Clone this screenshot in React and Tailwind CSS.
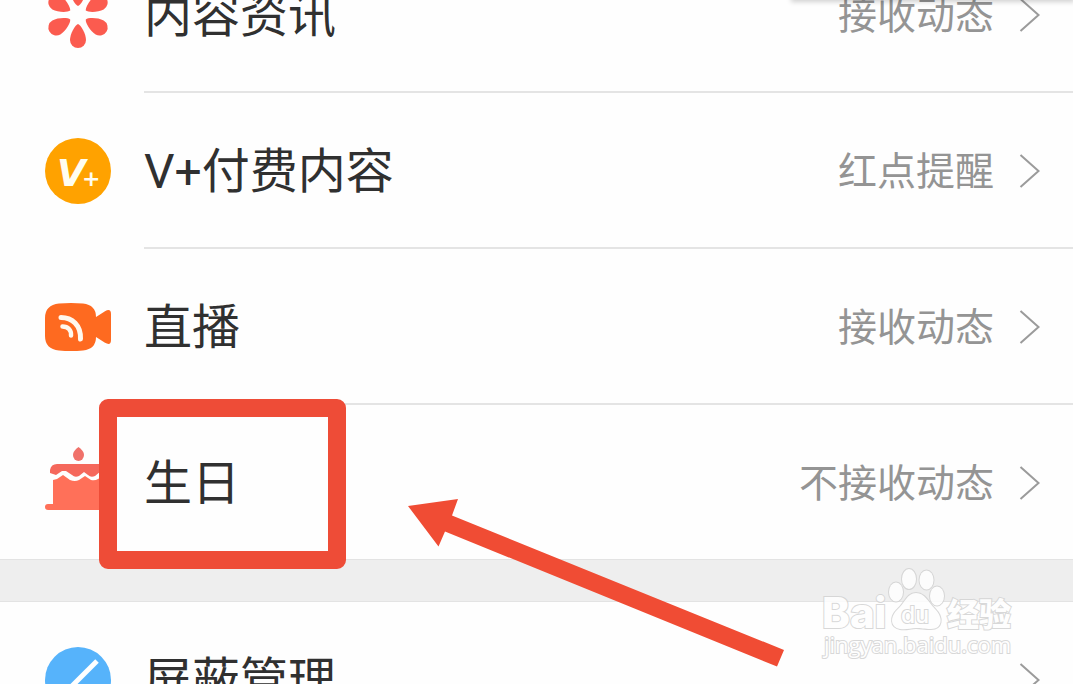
import React from "react";

function FlowerIcon() {
  return (
    <svg viewBox="0 0 66 66" className="size-[66px]" fill="#fb5b4f" aria-hidden="true">
      {[0, 60, 120, 180, 240, 300].map((angle) => (
        <path
          key={angle}
          transform={`rotate(${angle} 33 33)`}
          d="M33 42C36 43 41 52 41 58a8 8 0 0 1-16 0C25 52 30 43 33 42Z"
        />
      ))}
    </svg>
  );
}

function PaidIcon() {
  return (
    <svg viewBox="0 0 66 66" className="size-[66px]" aria-hidden="true">
      <circle cx="33" cy="33" r="33" fill="#ffa200" />
      <text x="12" y="48" fill="#fffdf0" fontFamily="'DejaVu Sans', sans-serif" fontSize="37" fontWeight="700" fontStyle="italic">
        V
        <tspan x="37" fontSize="22" fontStyle="normal">+</tspan>
      </text>
    </svg>
  );
}

function LiveIcon() {
  return (
    <svg viewBox="0 0 66 66" className="size-[66px]" aria-hidden="true">
      <path
        fill="#fe6a20"
        d="M14 9.5Q26 8.5 38 9.5Q51 11 51 23L60 17.2Q66 14 66 20V46Q66 52 60 48.8L51 43Q51 55 38 56.5Q26 57.5 14 56.5Q0 55 0 42V24Q0 11 14 9.5Z"
      />
      <g fill="none" stroke="#fff8ee" strokeLinecap="round">
        <path strokeWidth="5" d="M16 23.5C27 23.5 36 31 35.500 45" />
        <path strokeWidth="4.500" d="M17.500 32.500C23 32.500 26.500 36 26 41.500" />
      </g>
    </svg>
  );
}

function CakeIcon() {
  return (
    <svg viewBox="0 0 66 66" className="size-[66px] overflow-visible" aria-hidden="true">
      <path fill="#f0716a" d="M33.500-2C36 0 39 2.500 39 6a5.500 6 0 0 1-11 0C28 2.500 31 0 33.500-2Z" />
      <path
        fill="#f5685c"
        d="M12 15H55Q61 15 61 21V25L56 22L50 27Q46 29 43 26L39 23L34 27Q30 29 27 26L21 22L17 22L11 26L5 24V21Q6 15 12 15Z"
      />
      <path
        fill="#ff7059"
        d="M8 31L12 30L18 26L25 31Q30 33 34 31L40 27L46 31Q50 32 53 30L58 27V55H63Q66 55 66 58T63 61H3Q0 61 0 58T3 55H8Z"
      />
    </svg>
  );
}

function BlockIcon() {
  return (
    <svg viewBox="0 0 66 66" className="size-[66px]" aria-hidden="true">
      <circle cx="33" cy="33" r="33" fill="#56b3fb" />
      <path d="M52 14L14 52" stroke="#fff" strokeWidth="5" />
    </svg>
  );
}

function Chevron() {
  return (
    <svg viewBox="0 0 22 36" className="h-9 w-[22px]" fill="none" aria-hidden="true">
      <path d="M1.500 2L19.500 18L1.500 34" stroke="#9b9b9b" strokeWidth="2" />
    </svg>
  );
}

function Row({ icon, label, status, last = false }) {
  return (
    <button type="button" className="flex w-full items-stretch text-left">
      <span className="flex w-36 shrink-0 items-center pl-[45px]">{icon}</span>
      <span
        className={
          last
            ? "flex h-[154px] flex-1 items-center pt-[2px] pr-8"
            : "flex h-[156px] flex-1 items-center border-b-2 border-[#e4e4e4] pt-[2px] pr-8"
        }
      >
        <span className="flex-1 pt-0.5 text-5xl text-[#303030]">{label}</span>
        <span className="mr-[25px] pt-0.5 text-[39px] text-[#949494]">{status}</span>
        <Chevron />
      </span>
    </button>
  );
}

function Highlight() {
  return (
    <>
      <div className="pointer-events-none absolute -top-[6px] left-[99px] h-[170px] w-[247px] rounded-[9px] border-[18px] border-[#ee4c37]" />
      <svg
        viewBox="0 0 378 170"
        className="pointer-events-none absolute top-[93px] left-[407px] z-10 h-[170px] w-[378px]"
        aria-hidden="true"
      >
        <path fill="#f04c34" d="M1 8L51 1L45 17.500L377 152L370 168.500L38 33.500L31.500 48.500Z" />
      </svg>
    </>
  );
}

function Watermark() {
  return (
    <svg
      viewBox="0 0 196 96"
      className="pointer-events-none absolute top-[566px] right-[57px] h-24 w-[196px] opacity-85"
      fill="#fff"
      stroke="#d2d2d2"
      strokeWidth="2"
      paintOrder="stroke"
      role="img"
      aria-label="Baidu 经验"
    >
      <text x="2" y="62" fontFamily="Inter, sans-serif" fontSize="42" fontWeight="800">Bai</text>
      <ellipse cx="76" cy="26" rx="7" ry="9.500" />
      <ellipse cx="89" cy="13" rx="7" ry="10" />
      <ellipse cx="106.500" cy="14" rx="7" ry="9.500" />
      <ellipse cx="117" cy="30" rx="7" ry="9.500" />
      <path d="M96 27C105 27 108 36 115 43C124 52 122 63 111 63C104 63 101 62 96 62C90 62 87 64 80 63C70 61 70 51 77 44C85 37 87 27 96 27Z" />
      <text x="81" y="57" fontFamily="Inter, sans-serif" fontSize="23" fontWeight="500">du</text>
      <text x="127" y="60" fontFamily="'Noto Sans CJK SC', sans-serif" fontSize="32" fontWeight="900">经验</text>
      <text x="4" y="87" fontFamily="'Open Sans', sans-serif" fontSize="22" fontWeight="400">jingyan.baidu.com</text>
    </svg>
  );
}

export default function App() {
  return (
    <main className="relative h-screen overflow-hidden bg-[#fefefe] font-[Roboto,'Noto_Sans_CJK_SC',sans-serif]">
      <div className="-mt-[63px]">
        <Row icon={<FlowerIcon />} label="内容资讯" status="接收动态" />
        <Row icon={<PaidIcon />} label="V+付费内容" status="红点提醒" />
        <Row icon={<LiveIcon />} label="直播" status="接收动态" />
        <div className="relative">
          <Row icon={<CakeIcon />} label="生日" status="不接收动态" last />
          <Highlight />
        </div>
        <div className="h-[43px] border-y border-[#e3e3e3] bg-[#eeeeee]" />
        <Row icon={<BlockIcon />} label="屏蔽管理" status="" />
      </div>
      <div className="absolute -top-2 right-0 h-2 w-[280px] shadow-[0_0_5px_2px_rgba(0,0,0,0.18)]" />
      <Watermark />
    </main>
  );
}
